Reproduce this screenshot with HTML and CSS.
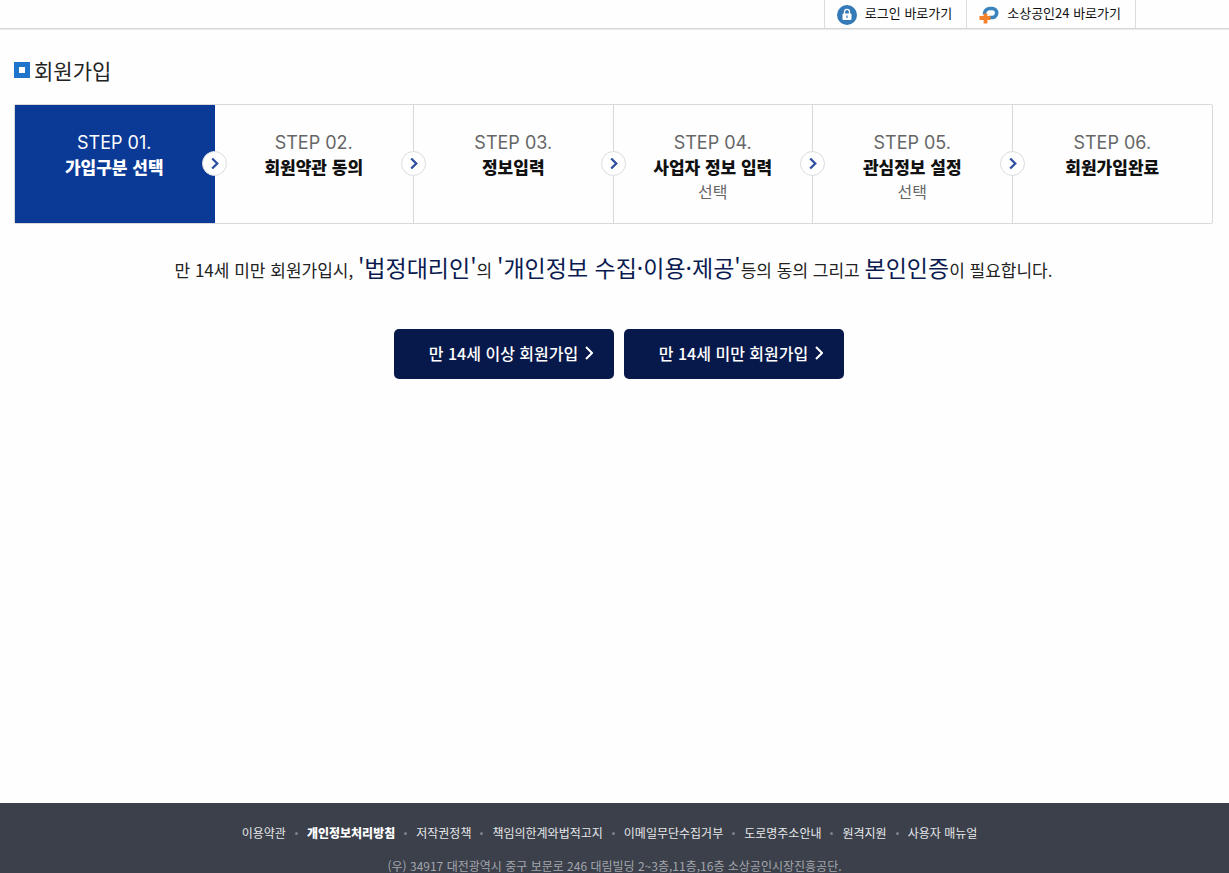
FILE: index.html
```
<!DOCTYPE html>
<html lang="ko">
<head>
	<meta charset="utf-8">
	<meta name="viewport" content="width=device-width, initial-scale=1">
	<title>회원가입</title>

	<link rel="stylesheet" href="styles.css">
</head>
<body>
	<header class="top">
		<nav class="top-links">
			<a href="#">
				<svg class="top-icon" viewBox="0 0 20 20">
					<circle cx="10" cy="10" r="10" fill="#337ab7"/>
					<path d="M7.5 9V6.8a2.5 2.5 0 0 1 5 0V9" fill="none" stroke="#fff" stroke-width="1.3"/>
					<rect x="5.5" y="8.5" width="9" height="6.5" rx="1" fill="#fff"/>
					<path d="M10 10.5v2.5" stroke="#337ab7" stroke-width="1.2"/>
				</svg>
				<span>로그인 바로가기</span>
			</a>
			<a href="#">
				<svg class="top-icon" viewBox="0 0 20 20">
					<path d="M5.500 9.500V9a5.500 5.500 0 0 1 5.500-5.500h2.200a4.500 4.500 0 0 1 0 9H10" fill="none" stroke="#3a83bd" stroke-width="3.600"/>
					<path d="M6.500 8.500v10M.5 13h11" fill="none" stroke="#f5822a" stroke-width="3.800"/>
				</svg>
				<span>소상공인24 바로가기</span>
			</a>
		</nav>
	</header>

	<main class="content">
		<h1 class="title">회원가입</h1>

		<ol class="steps">
			<li class="step on">
				<span>STEP 01.</span>
				<strong>가입구분 선택</strong>
				<svg class="next" viewBox="0 0 25 25"><path d="M10 7l5.500 5.500-5.500 5.500"/></svg>
			</li>
			<li class="step">
				<span>STEP 02.</span>
				<strong>회원약관 동의</strong>
				<svg class="next" viewBox="0 0 25 25"><path d="M10 7l5.500 5.500-5.500 5.500"/></svg>
			</li>
			<li class="step">
				<span>STEP 03.</span>
				<strong>정보입력</strong>
				<svg class="next" viewBox="0 0 25 25"><path d="M10 7l5.500 5.500-5.500 5.500"/></svg>
			</li>
			<li class="step">
				<span>STEP 04.</span>
				<strong>사업자 정보 입력</strong>
				<em>선택</em>
				<svg class="next" viewBox="0 0 25 25"><path d="M10 7l5.500 5.500-5.500 5.500"/></svg>
			</li>
			<li class="step">
				<span>STEP 05.</span>
				<strong>관심정보 설정</strong>
				<em>선택</em>
				<svg class="next" viewBox="0 0 25 25"><path d="M10 7l5.500 5.500-5.500 5.500"/></svg>
			</li>
			<li class="step">
				<span>STEP 06.</span>
				<strong>회원가입완료</strong>
			</li>
		</ol>

		<p class="notice">만 14세 미만 회원가입시, <b>'법정대리인'</b>의 <b>'개인정보 수집·이용·제공'</b>등의 동의 그리고 <b>본인인증</b>이 필요합니다.</p>

		<div class="buttons">
			<button type="button">만 14세 이상 회원가입
				<svg class="arrow" viewBox="0 0 8 14"><path d="M1 1l6 6-6 6"/></svg>
			</button>
			<button type="button">만 14세 미만 회원가입
				<svg class="arrow" viewBox="0 0 8 14"><path d="M1 1l6 6-6 6"/></svg>
			</button>
		</div>
	</main>

	<footer class="footer">
		<ul class="footer-links">
			<li><a href="#">이용약관</a></li>
			<li><a href="#" class="privacy">개인정보처리방침</a></li>
			<li><a href="#">저작권정책</a></li>
			<li><a href="#">책임의한계와법적고지</a></li>
			<li><a href="#">이메일무단수집거부</a></li>
			<li><a href="#">도로명주소안내</a></li>
			<li><a href="#">원격지원</a></li>
			<li><a href="#">사용자 매뉴얼</a></li>
		</ul>
		<address>(우) 34917 대전광역시 중구 보문로 246 대림빌딩 2~3층,11층,16층 소상공인시장진흥공단.</address>
	</footer>
</body>
</html>
```
FILE: styles.css
```
*, *::before {
	box-sizing: border-box;
}

body {
	min-height: 100vh;
	margin: 0;
	display: flex;
	flex-direction: column;
	background: #fefefe;
	color: #222;
	font-family: "Noto Sans CJK KR", sans-serif;
	font-size: 16px;
}

a {
	color: inherit;
	text-decoration: none;
}

ul, ol {
	margin: 0;
	padding: 0;
	list-style: none;
}

/* top bar */
.top {
	display: flex;
	justify-content: flex-end;
	padding-right: 93px;
	border-bottom: 1px solid #d5d5d5;
	box-shadow: 0 1px 1px #eee;
}

.top-links {
	display: flex;
	border-left: 1px solid #ddd;
}

.top-links a {
	display: flex;
	align-items: flex-end;
	gap: 8px;
	height: 28px;
	padding: 0 14px 3px 12px;
	border-right: 1px solid #ddd;
	color: #111;
	font-size: 13px;
	line-height: 24px;
}

.top-icon {
	width: 20px;
	height: 20px;
}

/* content */
.content {
	flex: 1;
	padding: 27px 16px 40px 14px;
}

.title {
	display: flex;
	align-items: center;
	gap: 4px;
	margin: 0;
	font-size: 21px;
	font-weight: 400;
	line-height: 28px;
}

.title::before {
	content: "";
	width: 16px;
	height: 16px;
	border: 5px solid #1f74cb;
	background: #fff;
}

.steps {
	display: grid;
	grid-template-columns: repeat(6, 1fr);
	margin-top: 20px;
	border: 1px solid #d9d9dc;
	border-radius: 2px;
}

.step {
	position: relative;
	display: flex;
	flex-direction: column;
	align-items: center;
	min-height: 118px;
	padding-top: 26px;
	border-right: 1px solid #d9d9dc;
	color: #666;
	line-height: 24px;
}

.step:last-child {
	border-right: 0;
}

.step span {
	font-family: Inter, sans-serif;
	font-size: 18px;
}

.step strong {
	color: #111;
	font-size: 17px;
	font-weight: 900;
}

.step em {
	font-style: normal;
}

.step.on {
	border-color: #0a3996;
	background: #0a3996;
	color: #fff;
}

.step.on strong {
	color: #fff;
}

/* round arrow over the line between two steps */
.next {
	position: absolute;
	top: 46px;
	right: -13px;
	z-index: 1;
	width: 25px;
	height: 25px;
	border: 1px solid #dcdce2;
	border-radius: 50%;
	background: #fff;
	fill: none;
	stroke: #2d4f9f;
	stroke-width: 2.500;
}

.notice {
	margin: 25px 0 0;
	font-size: 17px;
	line-height: 36px;
	text-align: center;
}

.notice b {
	color: #0a1b50;
	font-size: 23px;
	font-weight: 400;
}

.buttons {
	display: flex;
	justify-content: center;
	gap: 10px;
	margin-top: 41px;
	padding-left: 10px;
}

.buttons button {
	display: flex;
	align-items: center;
	justify-content: center;
	gap: 7px;
	width: 220px;
	height: 50px;
	padding: 0 0 2px 15px;
	border: 0;
	border-radius: 5px;
	background: #07194b;
	color: #fff;
	font-family: inherit;
	font-size: 16px;
	font-weight: 500;
	cursor: pointer;
}

.arrow {
	width: 8px;
	height: 14px;
	fill: none;
	stroke: #fff;
	stroke-width: 2;
}

/* footer */
.footer {
	padding-top: 20px;
	background: #3b404b;
	color: #a3a6ac;
	text-align: center;
}

.footer-links {
	display: flex;
	flex-wrap: wrap;
	justify-content: center;
	padding-right: 10px;
	color: #e6e7e9;
	font-size: 12px;
	line-height: 20px;
}

.footer-links li {
	display: flex;
	align-items: center;
}

.footer-links li + li::before {
	content: "";
	width: 3px;
	height: 3px;
	margin: 0 9px;
	border-radius: 50%;
	background: #7c8088;
}

.footer-links .privacy {
	color: #fff;
	font-weight: 900;
}

.footer address {
	margin-top: 16px;
	font-size: 12px;
	font-style: normal;
	line-height: 14px;
}
```
